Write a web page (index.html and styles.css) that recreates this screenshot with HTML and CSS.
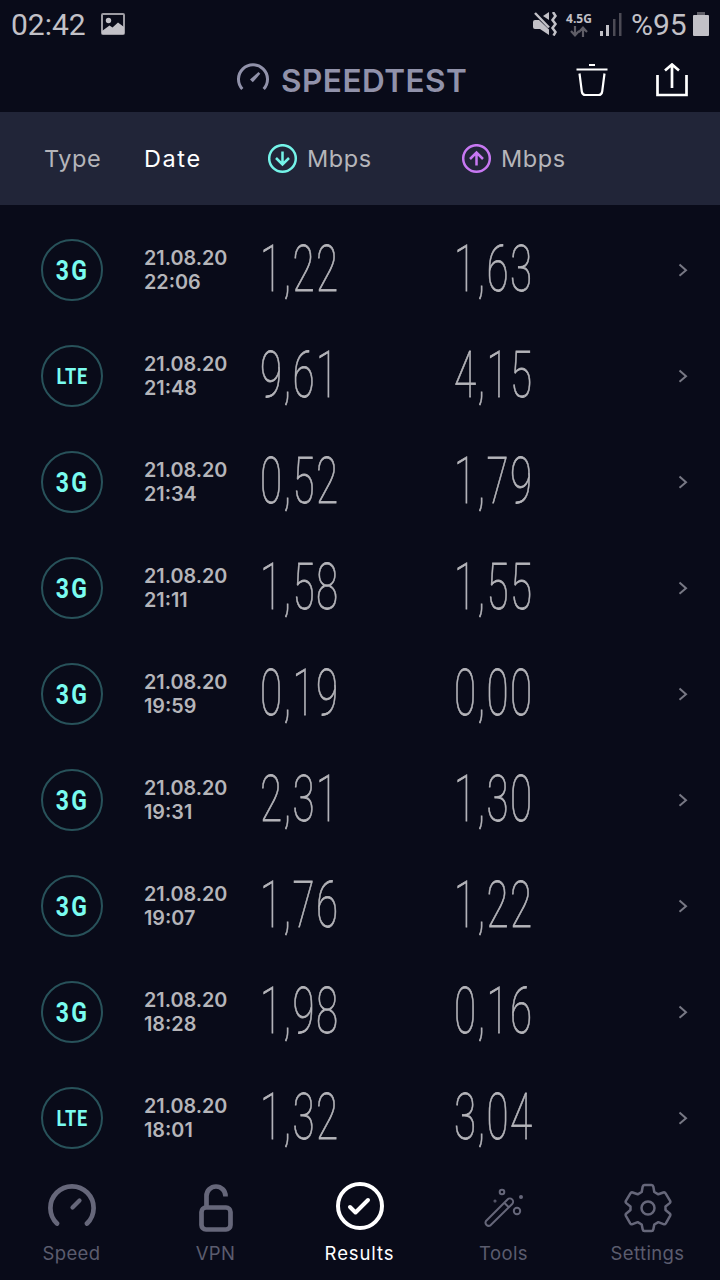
FILE: index.html
```
<!DOCTYPE html>
<html lang="en">
<head>
    <meta charset="UTF-8">
    <meta name="viewport" content="width=device-width, initial-scale=1.0">
    <title>Speedtest - Results</title>
    <link rel="stylesheet" href="styles.css">
</head>
<body>
    <div class="status-bar">
        <span class="clock">02:42</span>
        <svg class="picture-icon" width="24" height="22" viewBox="0 0 24 22">
            <path fill="none" stroke="#9d9ca3" stroke-width="2" d="M2 1h20a1 1 0 0 1 1 1v18a1 1 0 0 1-1 1H2a1 1 0 0 1-1-1V2a1 1 0 0 1 1-1z"/>
            <circle cx="7.500" cy="7.500" r="2.700" fill="#c2c1c7"/>
            <path fill="#c2c1c7" d="M1 18l7.500-5.500 3 2L17 9.500l6 4.500V21H1z"/>
        </svg>
        <div class="status-right">
            <svg class="mute-icon" width="25" height="24" viewBox="0 0 25 24">
                <path fill="#c2c1c7" d="M0 10a2 2 0 0 1 2-2h4l10 9.500V23L7 17H2a2 2 0 0 1-2-2zM10 4l6-4v8z"/>
                <path fill="none" stroke="#c2c1c7" stroke-width="2.500" d="M2 1l14 14.500M20 0l2.500 4-3 4 3 4-3 4 3 4-2 3.500"/>
            </svg>
            <div class="network">
                <span>4.5G</span>
                <svg width="18" height="11" viewBox="0 0 18 11">
                    <path fill="none" stroke="#5f5e67" stroke-width="2.200" d="M5 0v9M1 5l4 4.300L9 5M13 11V2M9 6l4-4.300L17 6"/>
                </svg>
            </div>
            <svg class="signal-icon" width="22" height="23" viewBox="0 0 22 23">
                <path fill="#c2c1c7" d="M0 18h3v5H0zM6 12h3v11H6z"/>
                <path fill="#4c4b55" d="M13 6h2.500v17H13zM19 0h2.500v23H19z"/>
            </svg>
            <span class="battery-text">%95</span>
            <svg class="battery-icon" width="16" height="24" viewBox="0 0 16 24">
                <path fill="#5f5e67" d="M4 0h8v4H4z"/>
                <rect y="3" width="16" height="21" rx="1" fill="#c2c1c7"/>
            </svg>
        </div>
    </div>

    <header class="app-bar">
        <div class="logo">
            <svg width="34" height="30" viewBox="0 0 34 30">
                <path fill="none" stroke="#9192aa" stroke-width="3" d="M6.300 26A14.500 14.500 0 1 1 27.700 26"/>
                <path fill="#9192aa" d="M14 16.500l8.500-7.500 1.800 1.800-7.500 8.500z"/>
            </svg>
            <span class="logo-text">SPEEDTEST</span>
        </div>
        <div class="actions">
            <svg width="32" height="34" viewBox="0 0 32 34" fill="none" stroke="#fff" stroke-width="2.200">
                <path d="M13 2h6M.500 6.500h31M3.500 10.500l2.300 18q.500 3.500 3.700 3.500h13q3.200 0 3.700-3.500l2.300-18"/>
            </svg>
            <svg width="32" height="34" viewBox="0 0 32 34" fill="none" stroke="#fff" stroke-width="2.700">
                <path d="M1.500 12v20h29V12M16 25V2M9 7.500l7-6 7 6"/>
            </svg>
        </div>
    </header>

    <div class="table-head">
        <span class="head-type">Type</span>
        <span class="head-date active">Date</span>
        <span class="head-speed">
            <svg width="30" height="30" viewBox="0 0 30 30" fill="none" stroke="#74f3e8" stroke-width="2.500">
                <circle cx="14.500" cy="14.500" r="13.300"/>
                <path d="M14.500 7.500v13M8 14l6.500 6.500L21 14"/>
            </svg>
            Mbps
        </span>
        <span class="head-speed">
            <svg width="30" height="30" viewBox="0 0 30 30" fill="none" stroke="#c778f2" stroke-width="2.500">
                <circle cx="14.500" cy="14.500" r="13.300"/>
                <path d="M14.500 21.500v-13M8 15l6.500-6.500L21 15"/>
            </svg>
            Mbps
        </span>
    </div>

    <main class="results">
        <div class="row">
            <span class="badge"><b>3G</b></span>
            <span class="date">21.08.20<br>22:06</span>
            <span class="speed">1,22</span>
            <span class="speed">1,63</span>
            <svg class="chevron" width="10" height="14" viewBox="0 0 10 14"><path d="M1.500 1.500L8 7.300l-6.500 5.500"/></svg>
        </div>
        <div class="row">
            <span class="badge lte"><b>LTE</b></span>
            <span class="date">21.08.20<br>21:48</span>
            <span class="speed">9,61</span>
            <span class="speed">4,15</span>
            <svg class="chevron" width="10" height="14" viewBox="0 0 10 14"><path d="M1.500 1.500L8 7.300l-6.500 5.500"/></svg>
        </div>
        <div class="row">
            <span class="badge"><b>3G</b></span>
            <span class="date">21.08.20<br>21:34</span>
            <span class="speed">0,52</span>
            <span class="speed">1,79</span>
            <svg class="chevron" width="10" height="14" viewBox="0 0 10 14"><path d="M1.500 1.500L8 7.300l-6.500 5.500"/></svg>
        </div>
        <div class="row">
            <span class="badge"><b>3G</b></span>
            <span class="date">21.08.20<br>21:11</span>
            <span class="speed">1,58</span>
            <span class="speed">1,55</span>
            <svg class="chevron" width="10" height="14" viewBox="0 0 10 14"><path d="M1.500 1.500L8 7.300l-6.500 5.500"/></svg>
        </div>
        <div class="row">
            <span class="badge"><b>3G</b></span>
            <span class="date">21.08.20<br>19:59</span>
            <span class="speed">0,19</span>
            <span class="speed">0,00</span>
            <svg class="chevron" width="10" height="14" viewBox="0 0 10 14"><path d="M1.500 1.500L8 7.300l-6.500 5.500"/></svg>
        </div>
        <div class="row">
            <span class="badge"><b>3G</b></span>
            <span class="date">21.08.20<br>19:31</span>
            <span class="speed">2,31</span>
            <span class="speed">1,30</span>
            <svg class="chevron" width="10" height="14" viewBox="0 0 10 14"><path d="M1.500 1.500L8 7.300l-6.500 5.500"/></svg>
        </div>
        <div class="row">
            <span class="badge"><b>3G</b></span>
            <span class="date">21.08.20<br>19:07</span>
            <span class="speed">1,76</span>
            <span class="speed">1,22</span>
            <svg class="chevron" width="10" height="14" viewBox="0 0 10 14"><path d="M1.500 1.500L8 7.300l-6.500 5.500"/></svg>
        </div>
        <div class="row">
            <span class="badge"><b>3G</b></span>
            <span class="date">21.08.20<br>18:28</span>
            <span class="speed">1,98</span>
            <span class="speed">0,16</span>
            <svg class="chevron" width="10" height="14" viewBox="0 0 10 14"><path d="M1.500 1.500L8 7.300l-6.500 5.500"/></svg>
        </div>
        <div class="row">
            <span class="badge lte"><b>LTE</b></span>
            <span class="date">21.08.20<br>18:01</span>
            <span class="speed">1,32</span>
            <span class="speed">3,04</span>
            <svg class="chevron" width="10" height="14" viewBox="0 0 10 14"><path d="M1.500 1.500L8 7.300l-6.500 5.500"/></svg>
        </div>
    </main>

    <nav class="tab-bar">
        <a class="tab">
            <svg width="48" height="52" viewBox="0 0 48 52" stroke-width="4.700">
                <path d="M9 41.500A21.600 21.600 0 1 1 39 41.500"/>
                <path stroke-width="4.200" d="M24.500 25.500l7-7"/>
            </svg>
            <span>Speed</span>
        </a>
        <a class="tab">
            <svg width="48" height="52" viewBox="0 0 48 52" stroke-width="4.700">
                <rect x="9.500" y="25.500" width="29" height="22" rx="4.500"/>
                <path stroke-linecap="butt" d="M14.500 25.500V14a9.500 9.500 0 0 1 19 0v.500"/>
            </svg>
            <span>VPN</span>
        </a>
        <a class="tab active">
            <svg width="48" height="52" viewBox="0 0 48 52" stroke-width="4">
                <circle cx="24" cy="24" r="22"/>
                <path d="M14 25l5.500 5.500L32 18"/>
            </svg>
            <span>Results</span>
        </a>
        <a class="tab">
            <svg width="48" height="52" viewBox="0 0 48 52" stroke-width="2">
                <path d="M6 39L27.500 17.500a3.200 3.200 0 0 1 4.700 4.500L10.500 43.300a3.200 3.200 0 0 1-4.500-4.300zM24.500 21l4 4"/>
                <circle cx="22" cy="10" r="2.300"/>
                <circle cx="37" cy="29" r="3.200"/>
                <circle cx="41" cy="15" r="1"/>
                <circle cx="15" cy="19" r=".500"/>
            </svg>
            <span>Tools</span>
        </a>
        <a class="tab">
            <svg width="48" height="52" viewBox="0 0 48 52" stroke-width="2.500">
                <path d="M20.500 3h7q1.500 0 1.800 1.500l1 5.500 4 2.300 5-1.800q1.500-.500 2.300.800l4.500 7.500q.7 1.300-.400 2.300L41.500 24.500v3.500l4.200 3.500q1.100 1 .400 2.300l-4.300 7.500q-.8 1.300-2.300.800l-5.200-1.900-4 2.300-1 5q-.3 1.500-1.800 1.500h-7q-1.500 0-1.800-1.500l-1-5-4-2.300-5.200 1.900q-1.500.5-2.300-.800l-4.300-7.500q-.7-1.300.4-2.300l4.200-3.500v-3.500l-4.200-3.400q-1.100-1-.4-2.300l4.500-7.500q.8-1.300 2.300-.8l5 1.800 4-2.300 1-5.500Q19 3 20.500 3z"/>
                <circle cx="24" cy="26" r="6.500"/>
            </svg>
            <span>Settings</span>
        </a>
    </nav>
</body>
</html>
```
FILE: styles.css
```
* {
    box-sizing: border-box;
}
body {
    margin: 0;
    width: 720px;
    height: 1280px;
    overflow: hidden;
    background-color: #090b19;
    color: #b5b5ba;
    font-family: Inter, "Open Sans", sans-serif;
}
svg {
    display: block;
    flex-shrink: 0;
}

/* phone status bar */
.status-bar {
    display: flex;
    align-items: center;
    height: 48px;
    padding: 0 11px;
    color: #c2c1c7;
    font-family: Roboto, sans-serif;
    font-size: 30px;
}
.clock {
    width: 90px;
}
.status-right {
    display: flex;
    align-items: center;
    margin-left: auto;
}
.network {
    display: flex;
    flex-direction: column;
    align-items: center;
    width: 26px;
    margin: 0 8px;
    font-family: "Open Sans", sans-serif;
    font-size: 12px;
    font-weight: 700;
    line-height: 14px;
}
.battery-text {
    width: 56px;
    margin: 0 6px 0 9px;
}

/* title and actions */
.app-bar {
    display: flex;
    justify-content: space-between;
    height: 64px;
    padding: 15px 32px 0 236px;
}
.logo {
    display: flex;
    gap: 11px;
    height: 34px;
    color: #9192aa;
}
.logo-text {
    font-size: 31.500px;
    font-weight: 600;
    line-height: 35px;
    letter-spacing: 0.5px;
}
.actions {
    display: flex;
    gap: 48px;
}

.table-head, .row {
    display: grid;
    grid-template-columns: 103px 116px 194px 1fr 10px;
    align-items: center;
    padding: 0 32px 0 41px;
}
.table-head {
    height: 93px;
    background-color: #212538;
    font-size: 23.500px;
    letter-spacing: 0.6px;
}
.head-type {
    padding-left: 3px;
}
.head-date {
    letter-spacing: 1.6px;
}
.head-speed {
    display: flex;
    align-items: center;
    gap: 9px;
    padding-left: 8px;
}
.active {
    color: #fff;
}

/* result list */
.results {
    padding-top: 12px;
}
.row {
    height: 106px;
}
.badge {
    display: flex;
    align-items: center;
    justify-content: center;
    width: 62px;
    height: 62px;
    border: 2px solid #28525a;
    border-radius: 50%;
    color: #7afcf0;
    font-family: Roboto, sans-serif;
    font-size: 28px;
}
.badge b {
    letter-spacing: 3px;
    margin-right: -2px;
    transform: scaleX(0.82);
}
.badge.lte {
    font-size: 22px;
}
.badge.lte b {
    letter-spacing: 1px;
    margin-right: -1px;
}
.date {
    font-size: 19.800px;
    font-weight: 600;
    line-height: 24px;
    white-space: nowrap;
}
/* thin condensed numerals */
.speed {
    padding-bottom: 3px;
    font-family: Roboto, sans-serif;
    font-size: 65px;
    font-weight: 100;
    line-height: 70px;
    letter-spacing: 2.400px;
    white-space: nowrap;
    transform: scaleX(0.62);
    transform-origin: left;
    -webkit-text-stroke: 0.8px #b5b5ba;
}
.chevron {
    fill: none;
    stroke: #777884;
    stroke-width: 2;
}

/* bottom navigation */
.tab-bar {
    display: grid;
    grid-template-columns: repeat(5, 144px);
    height: 109px;
    padding-top: 11px;
}
.tab {
    display: flex;
    flex-direction: column;
    align-items: center;
    gap: 5px;
    margin-left: -1px;
    color: #5b5c6e;
    font-size: 18.500px;
    line-height: 28px;
    letter-spacing: 0.4px;
}
.tab svg {
    margin-left: 1px;
    fill: none;
    stroke: #66677a;
    stroke-linecap: round;
    stroke-linejoin: round;
}
.tab.active {
    color: #fff;
    letter-spacing: 0.9px;
}
.tab.active svg {
    stroke: #fff;
}
```
